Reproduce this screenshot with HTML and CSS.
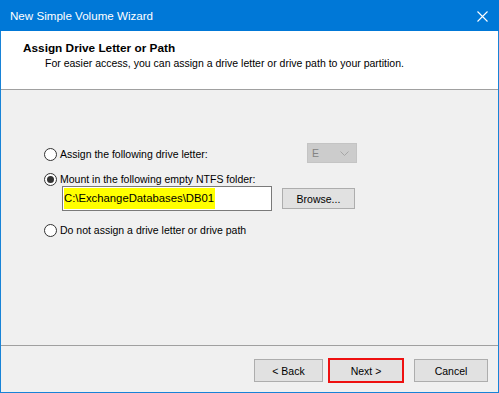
FILE: index.html
```html
<!DOCTYPE html>
<html lang="en">
<head>
    <meta charset="UTF-8">
    <title>New Simple Volume Wizard</title>
    <link rel="stylesheet" href="styles.css">
</head>
<body>
    <div class="window">
        <div class="titlebar">
            <span>New Simple Volume Wizard</span>
            <svg class="close" width="11" height="11" viewBox="0 0 11 11">
                <path d="M0.5 0.5 L10.5 10.5 M10.5 0.5 L0.5 10.5" stroke="#fff" stroke-width="1.1" fill="none"/>
            </svg>
        </div>

        <div class="header">
            <div class="heading">Assign Drive Letter or Path</div>
            <div class="subtitle">For easier access, you can assign a drive letter or drive path to your partition.</div>
        </div>
        <div class="rule"></div>

        <div class="content">
            <div class="row first">
                <div class="option">
                    <span class="radio"></span>
                    <span>Assign the following drive letter:</span>
                </div>
                <div class="select">
                    <span>E</span>
                    <svg width="9" height="5" viewBox="0 0 9 5">
                        <path d="M0.5 0.5 L4.5 4.5 L8.5 0.5" stroke="#a6a6a6" fill="none"/>
                    </svg>
                </div>
            </div>

            <div class="option second">
                <span class="radio checked"></span>
                <span>Mount in the following empty NTFS folder:</span>
            </div>
            <div class="folder-row">
                <div class="textbox"><span class="mark">C:\ExchangeDatabases\DB01</span></div>
                <button class="btn browse">Browse...</button>
            </div>

            <div class="option third">
                <span class="radio"></span>
                <span>Do not assign a drive letter or drive path</span>
            </div>
        </div>
        <div class="rule"></div>

        <div class="footer">
            <button class="btn back">&lt; Back</button>
            <button class="btn next">Next &gt;</button>
            <button class="btn cancel">Cancel</button>
        </div>
    </div>
</body>
</html>
```

FILE: styles.css
```css
body {
    margin: 0;
    font-family: 'Liberation Sans', Arial, sans-serif;
    font-size: 10.5px;
    color: #000;
}
.window {
    width: 499px;
    height: 393px;
    box-sizing: border-box;
    border: 1px solid #1883d7;
    border-top: none;
    display: flex;
    flex-direction: column;
    background-color: #f0f0f0;
}
.titlebar {
    height: 31px;
    margin: 0 -1px;
    background-color: #0078d7;
    color: #fff;
    font-size: 11.6px;
    display: flex;
    align-items: center;
    justify-content: space-between;
    padding: 0 11px 0 10px;
    flex: none;
}
.close {
    display: block;
    margin-top: 1px;
}
.header {
    height: 58px;
    background-color: #fff;
    padding: 10px 0 0 22px;
    box-sizing: border-box;
    flex: none;
}
.heading {
    font-weight: bold;
    font-size: 11.8px;
    line-height: 15px;
}
.subtitle {
    line-height: 15px;
    padding-left: 22px;
}
.rule {
    height: 1px;
    background-color: #a0a0a0;
    flex: none;
}
.content {
    flex: 1;
    padding: 53px 0 0 43px;
}
.row {
    display: flex;
    align-items: flex-start;
}
.row.first {
    width: 313px;
    height: 20px;
}
.row.first .option {
    margin-top: 5px;
}
.option {
    display: flex;
    align-items: center;
    gap: 3px;
    line-height: 13px;
}
.option.second {
    margin-top: 10px;
}
.option.third {
    margin-top: 13px;
}
.radio {
    width: 13px;
    height: 13px;
    box-sizing: border-box;
    border: 1px solid #333;
    border-radius: 50%;
    background-color: #fff;
    display: flex;
    align-items: center;
    justify-content: center;
}
.radio.checked::after {
    content: "";
    width: 7px;
    height: 7px;
    border-radius: 50%;
    background-color: #333;
}
.select {
    margin-left: auto;
    width: 50px;
    height: 20px;
    box-sizing: border-box;
    background-color: #cccccc;
    border: 1px solid #c4c4c4;
    color: #838383;
    display: flex;
    align-items: center;
    justify-content: space-between;
    padding: 0 7px 0 4px;
}
.folder-row {
    display: flex;
    align-items: center;
    margin: 0 0 0 18px;
}
.textbox {
    width: 210px;
    height: 25px;
    box-sizing: border-box;
    border: 1px solid #7a7a7a;
    background-color: #fff;
    padding: 1px;
    display: flex;
}
.mark {
    background-color: #ffff00;
    font-size: 11.3px;
    line-height: 21px;
    padding-right: 1px;
}
.btn {
    font-family: 'Liberation Sans', Arial, sans-serif;
    font-size: 10.5px;
    color: #000;
    background-color: #e1e1e1;
    border: 1px solid #adadad;
    padding: 0;
    height: 23px;
}
.browse {
    width: 73px;
    height: 21px;
    margin-left: 10px;
}
.footer {
    height: 46px;
    flex: none;
    display: flex;
    justify-content: flex-end;
    align-items: flex-start;
    padding: 13px 10px 0 0;
    box-sizing: border-box;
}
.back {
    width: 69px;
}
.next {
    width: 76px;
    height: 25px;
    margin: -1px 0 0 5px;
    border: 2px solid #ee1111;
}
.cancel {
    width: 74px;
    margin-left: 10px;
}
```
